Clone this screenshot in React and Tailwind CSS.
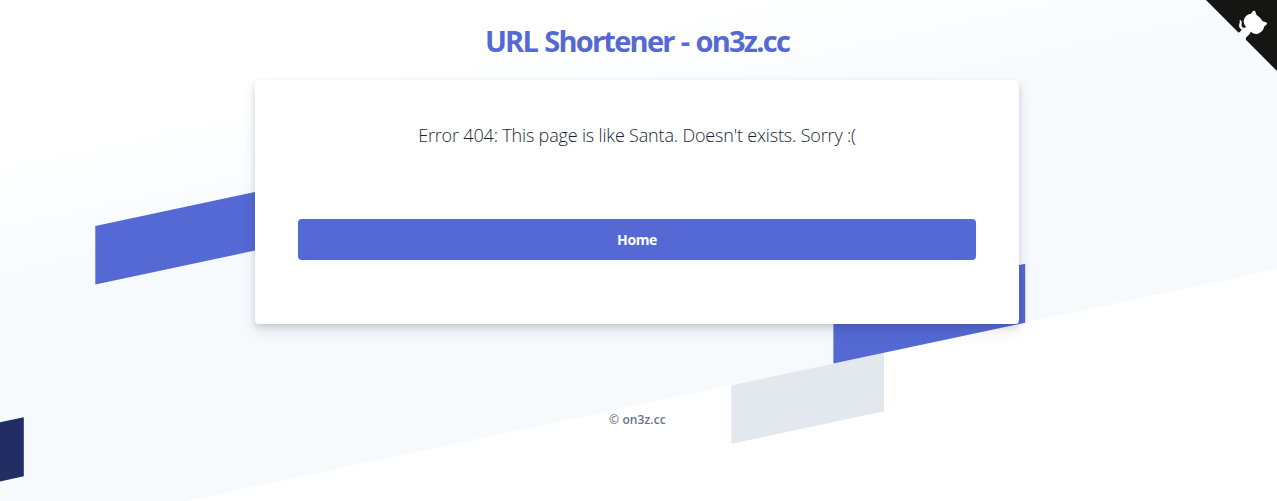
function Backdrop() {
  return (
    <svg className="absolute inset-0 -z-10 h-full w-full" viewBox="0 0 1277 501" preserveAspectRatio="none" aria-hidden="true">
      <defs>
        <linearGradient id="fade" gradientUnits="userSpaceOnUse" x1="0" y1="156" x2="31" y2="302">
          <stop offset="0" stopColor="#ffffff" />
          <stop offset="1" stopColor="#f6fafd" />
        </linearGradient>
      </defs>
      <polygon points="0,0 1277,0 1277,269 0,540.5" fill="url(#fade)" />
      <polygon points="95.3,226 287.3,185.2 287.3,243.7 95.3,284.5" fill="#5469d4" />
      <polygon points="731.3,385.3 884,352.8 884,411.2 731.3,443.7" fill="#e3e8ee" />
      <polygon points="833.4,304.5 1025.2,263.8 1025.2,322.7 833.4,363.5" fill="#5469d4" />
      <polygon points="0,422.3 23.8,417.2 23.8,476.3 0,481.4" fill="#212d63" />
    </svg>
  );
}

function GithubCorner() {
  return (
    <a href="#" aria-label="View source on GitHub" className="absolute top-0 right-0">
      <svg width="71" height="71" viewBox="0 0 250 250" className="block fill-[#151513] text-white" aria-hidden="true">
        <path d="M0,0 L115,115 L130,115 L142,142 L250,250 L250,0 Z" />
        <path
          d="M128.3,109.0 C113.8,99.7 119.0,89.6 119.0,89.6 C122.0,82.7 120.5,78.6 120.5,78.6 C119.2,72.0 123.4,76.3 123.4,76.3 C127.3,80.9 125.5,87.3 125.5,87.3 C122.9,97.6 130.6,101.9 134.4,103.2"
          fill="currentColor"
          stroke="currentColor"
          strokeWidth="2"
          transform="translate(-1 -4)"
        />
        <path
          d="M115.0,115.0 C114.9,115.1 118.7,116.5 119.8,115.4 L133.7,101.6 C136.9,99.2 139.9,98.4 142.2,98.6 C133.8,88.0 127.5,74.4 143.8,58.0 C148.5,53.4 154.0,51.2 159.7,51.0 C160.3,49.4 163.2,43.6 171.4,40.1 C171.4,40.1 176.1,42.5 178.8,56.2 C183.1,58.6 187.2,61.8 190.9,65.4 C194.5,69.0 197.7,73.2 200.1,77.6 C213.8,80.2 216.3,84.9 216.3,84.9 C212.7,93.1 206.9,96.0 205.4,96.6 C205.1,102.4 203.0,107.8 198.3,112.5 C181.9,128.9 168.3,122.5 157.7,114.1 C157.9,116.9 156.7,120.9 152.7,124.9 L141.0,136.5 C139.8,137.7 141.6,141.9 141.8,141.8 Z"
          fill="currentColor"
          transform="translate(-1 -3)"
        />
      </svg>
    </a>
  );
}

export default function App() {
  return (
    <div className="relative isolate flex h-screen w-full flex-col items-center overflow-hidden bg-white pr-[3px] font-['Open_Sans','Noto_Sans',sans-serif]">
      <Backdrop />
      <GithubCorner />
      <h1 className="mt-[19px] mb-[17px] text-[29px] leading-[44px] font-bold tracking-[-1.75px] text-[#5469d4] [word-spacing:1.3px]">URL Shortener - on3z.cc</h1>
      <main className="flex h-[244px] w-[764px] flex-col rounded-[4px] bg-white px-[43px] pt-[41px] shadow-[0_7px_14px_0_rgba(60,66,87,0.12),0_3px_6px_0_rgba(0,0,0,0.12)]">
        <p className="text-center text-[18px] leading-7 font-light tracking-[-0.17px] text-[#1a1f36]">Error 404: This page is like Santa. Doesn't exists. Sorry :(</p>
        <a
          href="#"
          className="mt-[70px] flex h-[41px] items-center justify-center rounded-[4px] bg-[#5469d4] text-[14px] font-bold tracking-[-0.4px] text-white shadow-[0_2px_5px_0_rgba(60,66,87,0.04)]"
        >
          Home
        </a>
      </main>
      <footer className="mt-[86px] pl-px text-[12px] leading-5 font-semibold tracking-[0.1px] text-[#697386]">© on3z.cc</footer>
    </div>
  );
}
